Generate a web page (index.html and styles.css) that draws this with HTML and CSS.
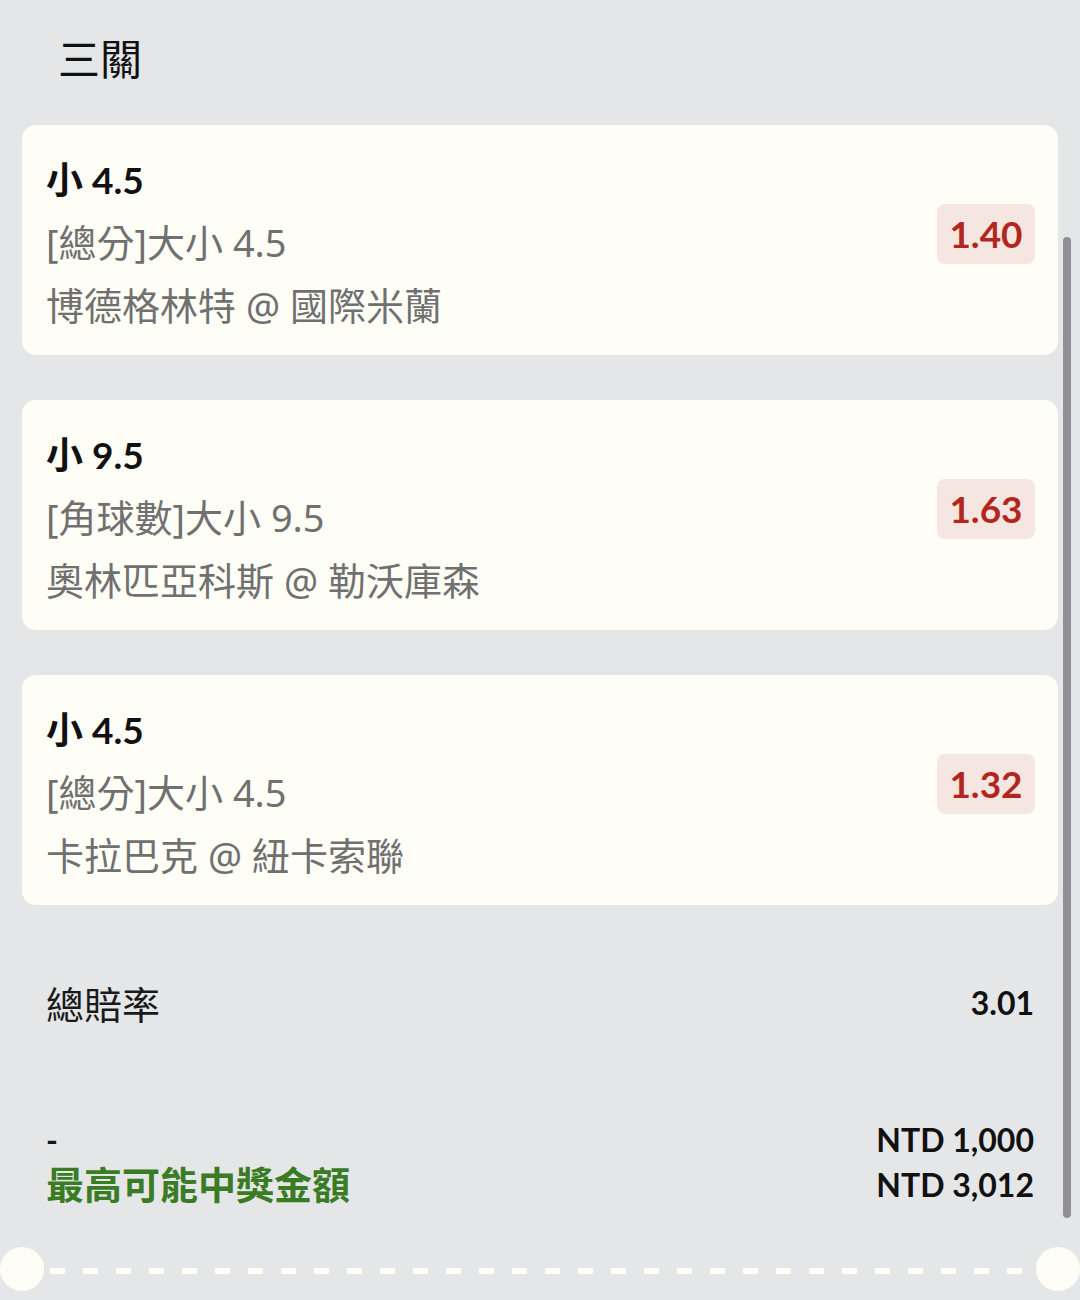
FILE: index.html
```html
<!DOCTYPE html>
<html lang="zh-Hant">
  <head>
    <meta charset="UTF-8" />
    <meta name="viewport" content="width=device-width, initial-scale=1.0" />
    <title>三關</title>
    <link rel="stylesheet" href="styles.css">
  </head>
  <body>
    <div class="slip">
      <h2 class="slip-title">三關</h2>

      <div class="bet-card">
        <div class="bet-info">
          <div class="bet-pick">小 4.5</div>
          <div class="bet-market">[總分]大小 4.5</div>
          <div class="bet-match">博德格林特 @ 國際米蘭</div>
        </div>
        <div class="bet-odds">1.40</div>
      </div>

      <div class="bet-card">
        <div class="bet-info">
          <div class="bet-pick">小 9.5</div>
          <div class="bet-market">[角球數]大小 9.5</div>
          <div class="bet-match">奧林匹亞科斯 @ 勒沃庫森</div>
        </div>
        <div class="bet-odds">1.63</div>
      </div>

      <div class="bet-card">
        <div class="bet-info">
          <div class="bet-pick">小 4.5</div>
          <div class="bet-market">[總分]大小 4.5</div>
          <div class="bet-match">卡拉巴克 @ 紐卡索聯</div>
        </div>
        <div class="bet-odds">1.32</div>
      </div>

      <div class="summary-row total-odds">
        <span class="summary-label">總賠率</span>
        <span class="summary-value">3.01</span>
      </div>

      <div class="payout">
        <div class="summary-row">
          <span class="stake-dash">-</span>
          <span class="summary-value">NTD 1,000</span>
        </div>
        <div class="summary-row">
          <span class="payout-label">最高可能中獎金額</span>
          <span class="summary-value">NTD 3,012</span>
        </div>
      </div>

      <div class="ticket-edge">
        <span class="notch notch-left"></span>
        <span class="dashes"></span>
        <span class="notch notch-right"></span>
      </div>
    </div>

    <div class="scrollbar"></div>
  </body>
</html>
```

FILE: styles.css
```css
/* Base */
* {
  box-sizing: border-box;
  margin: 0;
  padding: 0;
}
html {
  font-size: 16px;
}
body {
  font-family: "Lato", "Noto Sans CJK TC", sans-serif;
  background: #e5e6e8;
  color: #151515;
  min-height: 100vh;
  overflow: hidden;
  position: relative;
}

/* Slip */
.slip {
  padding: 0 22px;
}
.slip-title {
  font-family: "Noto Sans CJK TC", sans-serif;
  font-size: 42px;
  font-weight: 400;
  line-height: 50px;
  padding: 32px 0 0 36px;
  height: 125px;
  color: #111;
}

/* Bet cards */
.bet-card {
  background: #fefdf6;
  border-radius: 14px;
  height: 230px;
  padding: 23px 23px 17px 24px;
  margin-bottom: 45px;
  display: flex;
  justify-content: space-between;
  align-items: center;
}
.bet-info {
  font-size: 38px;
  line-height: 63px;
  color: #707070;
  align-self: flex-start;
}
.bet-pick {
  font-size: 37px;
  color: #111;
  font-weight: 700;
}
.bet-market,
.bet-match {
  font-family: "Noto Sans", "Noto Sans CJK TC", sans-serif;
  font-weight: 400;
}
.bet-odds {
  background: #f6e6e1;
  color: #b3261e;
  font-size: 37px;
  font-weight: 700;
  border-radius: 8px;
  width: 98px;
  height: 60px;
  line-height: 60px;
  text-align: center;
  margin-bottom: 18px;
}

/* Summary */
.summary-row {
  display: flex;
  justify-content: space-between;
  align-items: center;
  padding: 0 24px;
  line-height: 45px;
}
.total-odds {
  margin-top: 75px;
}
.summary-label {
  font-family: "Noto Sans CJK TC", sans-serif;
  font-size: 38px;
  font-weight: 400;
  color: #1a1a1a;
}
.summary-value {
  font-size: 32px;
  font-weight: 700;
  color: #111;
}
.payout {
  margin-top: 92px;
}
.stake-dash {
  font-size: 32px;
  font-weight: 700;
}
.payout-label {
  font-size: 38px;
  font-weight: 700;
  color: #3a7c24;
}

/* Ticket edge */
.ticket-edge {
  display: flex;
  align-items: center;
  margin: 40px -22px 0;
  height: 44px;
}
.notch {
  width: 44px;
  height: 44px;
  border-radius: 50%;
  background: #fefdf6;
  flex-shrink: 0;
}
.dashes {
  flex: 1;
  height: 6px;
  margin: 3px 6px 0;
  background: repeating-linear-gradient(
    to right,
    #fefdf6 0 15px,
    transparent 15px 33px
  );
}

/* Scroll indicator */
.scrollbar {
  position: absolute;
  left: 1063px;
  top: 237px;
  width: 8px;
  height: 981px;
  border-radius: 4px;
  background: #909094;
}
```
